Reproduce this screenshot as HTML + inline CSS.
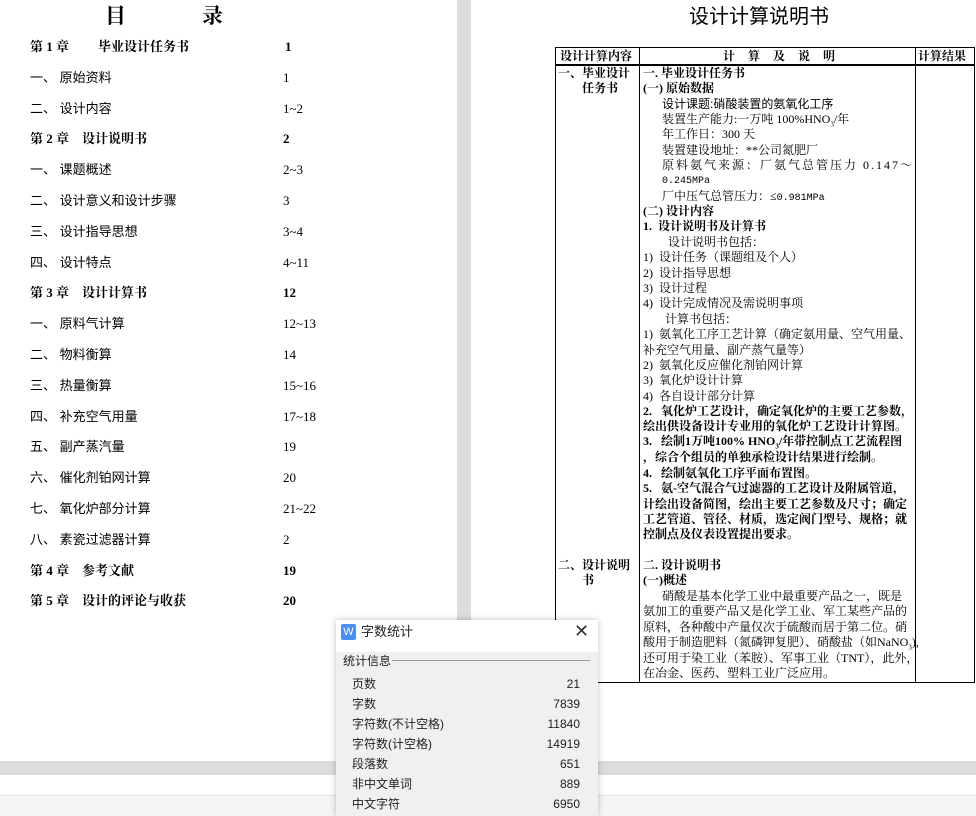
<!DOCTYPE html>
<html><head><meta charset="utf-8"><style>
*{margin:0;padding:0;box-sizing:border-box}
body{width:976px;height:816px;overflow:hidden;background:#fff;position:relative;font-family:"Liberation Serif","Noto Serif CJK SC",serif;color:#000}
.a{position:absolute;white-space:nowrap;line-height:16px}
.t{font-size:13px}
.b{font-weight:bold}
.s{font-family:"Liberation Sans","Noto Sans CJK SC",sans-serif}
.r{font-size:12px;line-height:15px}
.d{font-family:"Liberation Sans","Noto Sans CJK SC",sans-serif;font-size:12px;color:#222}
</style></head><body>
<div class="a" style="left:457px;top:0;width:14px;height:761px;background:#dcdddf"></div>
<div class="a" style="left:0;top:761px;width:976px;height:14px;background:#dbdcde"></div>
<div class="a" style="left:0;top:795px;width:976px;height:1px;background:#e2e3e5"></div>
<div class="a" style="left:0;top:796px;width:976px;height:20px;background:#f4f5f7"></div>

<div class="a b" style="left:105px;top:4px;font-size:21px;line-height:24px">目</div>
<div class="a b" style="left:202px;top:4px;font-size:21px;line-height:24px">录</div>

<div class="a t b" style="left:30px;top:39px">第 1 章</div><div class="a t b" style="left:98px;top:39px">毕业设计任务书</div><div class="a t b" style="left:285px;top:39px">1</div>
<div class="a t s" style="left:30px;top:70px">一、 原始资料</div><div class="a t" style="left:283px;top:70px">1</div>
<div class="a t s" style="left:30px;top:101px">二、 设计内容</div><div class="a t" style="left:283px;top:101px">1~2</div>
<div class="a t b" style="left:30px;top:131px">第 2 章</div><div class="a t b" style="left:82px;top:131px">设计说明书</div><div class="a t b" style="left:283px;top:131px">2</div>
<div class="a t s" style="left:30px;top:162px">一、 课题概述</div><div class="a t" style="left:283px;top:162px">2~3</div>
<div class="a t s" style="left:30px;top:193px">二、 设计意义和设计步骤</div><div class="a t" style="left:283px;top:193px">3</div>
<div class="a t s" style="left:30px;top:224px">三、 设计指导思想</div><div class="a t" style="left:283px;top:224px">3~4</div>
<div class="a t s" style="left:30px;top:255px">四、 设计特点</div><div class="a t" style="left:283px;top:255px">4~11</div>
<div class="a t b" style="left:30px;top:285px">第 3 章</div><div class="a t b" style="left:82px;top:285px">设计计算书</div><div class="a t b" style="left:283px;top:285px">12</div>
<div class="a t s" style="left:30px;top:316px">一、 原料气计算</div><div class="a t" style="left:283px;top:316px">12~13</div>
<div class="a t s" style="left:30px;top:347px">二、 物料衡算</div><div class="a t" style="left:283px;top:347px">14</div>
<div class="a t s" style="left:30px;top:378px">三、 热量衡算</div><div class="a t" style="left:283px;top:378px">15~16</div>
<div class="a t s" style="left:30px;top:409px">四、 补充空气用量</div><div class="a t" style="left:283px;top:409px">17~18</div>
<div class="a t s" style="left:30px;top:439px">五、 副产蒸汽量</div><div class="a t" style="left:283px;top:439px">19</div>
<div class="a t s" style="left:30px;top:470px">六、 催化剂铂网计算</div><div class="a t" style="left:283px;top:470px">20</div>
<div class="a t s" style="left:30px;top:501px">七、 氧化炉部分计算</div><div class="a t" style="left:283px;top:501px">21~22</div>
<div class="a t s" style="left:30px;top:532px">八、 素瓷过滤器计算</div><div class="a t" style="left:283px;top:532px">2</div>
<div class="a t b" style="left:30px;top:563px">第 4 章</div><div class="a t b" style="left:82px;top:563px">参考文献</div><div class="a t b" style="left:283px;top:563px">19</div>
<div class="a t b" style="left:30px;top:593px">第 5 章</div><div class="a t b" style="left:82px;top:593px">设计的评论与收获</div><div class="a t b" style="left:283px;top:593px">20</div>

<div class="a" style="left:689px;top:5px;font-size:20px;line-height:24px;font-family:'Liberation Sans','Noto Sans CJK SC',sans-serif">设计计算说明书</div>

<div class="a" style="left:555px;top:47px;width:420px;height:636px;border:1.5px solid #000"></div>
<div class="a" style="left:639px;top:47px;width:1px;height:636px;background:#000"></div>
<div class="a" style="left:915px;top:47px;width:1px;height:636px;background:#000"></div>
<div class="a" style="left:555px;top:64px;width:420px;height:1.5px;background:#000"></div>
<div class="a r b" style="left:560px;top:49px">设计计算内容</div>
<div class="a r b" style="left:723px;top:49px;letter-spacing:5px">计 算 及 说 明</div>
<div class="a r b" style="left:918px;top:49px">计算结果</div>
<div class="a r b" style="left:558px;top:66px">一、毕业设计</div>
<div class="a r b" style="left:582px;top:81px">任务书</div>
<div class="a r b" style="left:558px;top:558px">二、设计说明</div>
<div class="a r b" style="left:582px;top:573px">书</div>

<div class="a r b" style="left:643px;top:66px">一. 毕业设计任务书</div>
<div class="a r b" style="left:643px;top:81px">(一) 原始数据</div>
<div class="a r s" style="left:662px;top:97px">设计课题:硝酸装置的氨氧化工序</div>
<div class="a r" style="left:662px;top:112px">装置生产能力:一万吨 100%HNO<sub style="font-size:7px">3</sub>/年</div>
<div class="a r" style="left:662px;top:127px">年工作日：300 天</div>
<div class="a r" style="left:662px;top:143px">装置建设地址：**公司氮肥厂</div>
<div class="a r" style="left:662px;top:158px;letter-spacing:2px">原料氨气来源：厂氨气总管压力 0.147～</div>
<div class="a r" style="left:662px;top:174px;font-size:10px;font-family:'Liberation Mono',monospace">0.245MPa</div>
<div class="a r" style="left:662px;top:189px">厂中压气总管压力：≤<span style="font-family:'Liberation Mono',monospace;font-size:10px">0.981MPa</span></div>
<div class="a r b" style="left:643px;top:204px">(二) 设计内容</div>
<div class="a r b" style="left:643px;top:219px">1. &nbsp;设计说明书及计算书</div>
<div class="a r" style="left:668px;top:235px">设计说明书包括：</div>
<div class="a r" style="left:643px;top:250px">1) &nbsp;设计任务（课题组及个人）</div>
<div class="a r" style="left:643px;top:266px">2) &nbsp;设计指导思想</div>
<div class="a r" style="left:643px;top:281px">3) &nbsp;设计过程</div>
<div class="a r" style="left:643px;top:296px">4) &nbsp;设计完成情况及需说明事项</div>
<div class="a r" style="left:665px;top:312px">计算书包括：</div>
<div class="a r" style="left:643px;top:327px">1) &nbsp;氨氧化工序工艺计算（确定氨用量、空气用量、</div>
<div class="a r" style="left:643px;top:343px">补充空气用量、副产蒸气量等）</div>
<div class="a r" style="left:643px;top:358px">2) &nbsp;氨氧化反应催化剂铂网计算</div>
<div class="a r" style="left:643px;top:373px">3) &nbsp;氧化炉设计计算</div>
<div class="a r" style="left:643px;top:389px">4) &nbsp;各自设计部分计算</div>
<div class="a r b" style="left:643px;top:404px">2. &nbsp;&nbsp;氧化炉工艺设计，确定氧化炉的主要工艺参数，</div>
<div class="a r b" style="left:643px;top:419px">绘出供设备设计专业用的氧化炉工艺设计计算图。</div>
<div class="a r b" style="left:643px;top:434px">3. &nbsp;&nbsp;绘制1万吨100% HNO<sub style="font-size:7px">3</sub>/年带控制点工艺流程图</div>
<div class="a r b" style="left:643px;top:450px">，综合个组员的单独承检设计结果进行绘制。</div>
<div class="a r b" style="left:643px;top:466px">4. &nbsp;&nbsp;绘制氨氧化工序平面布置图。</div>
<div class="a r b" style="left:643px;top:481px">5. &nbsp;&nbsp;氨-空气混合气过滤器的工艺设计及附属管道，</div>
<div class="a r b" style="left:643px;top:497px">计绘出设备简图，绘出主要工艺参数及尺寸；确定</div>
<div class="a r b" style="left:643px;top:512px">工艺管道、管径、材质，选定阀门型号、规格；就</div>
<div class="a r b" style="left:643px;top:527px">控制点及仪表设置提出要求。</div>
<div class="a r b" style="left:643px;top:558px">二. 设计说明书</div>
<div class="a r b" style="left:643px;top:573px">(一)概述</div>
<div class="a r" style="left:662px;top:589px">硝酸是基本化学工业中最重要产品之一，既是</div>
<div class="a r" style="left:643px;top:604px">氨加工的重要产品又是化学工业、军工某些产品的</div>
<div class="a r" style="left:643px;top:620px">原料，各种酸中产量仅次于硫酸而居于第二位。硝</div>
<div class="a r" style="left:643px;top:635px">酸用于制造肥料（氮磷钾复肥）、硝酸盐（如NaNO<sub style="font-size:7px">3</sub>),</div>
<div class="a r" style="left:643px;top:651px">还可用于染工业（苯胺）、军事工业（TNT），此外，</div>
<div class="a r" style="left:643px;top:666px">在冶金、医药、塑料工业广泛应用。</div>

<div class="a" style="left:336px;top:620px;width:262px;height:196px;background:#f0f0f0;box-shadow:0 0 6px rgba(0,0,0,.25)"></div>
<div class="a" style="left:336px;top:620px;width:262px;height:32px;background:#fff"></div>
<div class="a" style="left:341px;top:624px;width:15px;height:16px;background:#4a8ef0;border-radius:2px;color:#fff;font-size:11px;line-height:16px;text-align:center;font-family:'Liberation Sans',sans-serif">W</div>
<div class="a d" style="left:361px;top:624px;font-size:13px">字数统计</div>
<div class="a" style="left:574px;top:622px;font-size:18px;line-height:20px;color:#333;font-family:'DejaVu Sans',sans-serif">✕</div>
<div class="a d" style="left:343px;top:653px">统计信息</div>
<div class="a" style="left:392px;top:660px;width:198px;height:1px;background:#999"></div>
<div class="a d" style="left:352px;top:676px">页数</div><div class="a d" style="left:540px;top:676px;width:40px;text-align:right">21</div>
<div class="a d" style="left:352px;top:696px">字数</div><div class="a d" style="left:540px;top:696px;width:40px;text-align:right">7839</div>
<div class="a d" style="left:352px;top:716px">字符数(不计空格)</div><div class="a d" style="left:530px;top:716px;width:50px;text-align:right">11840</div>
<div class="a d" style="left:352px;top:736px">字符数(计空格)</div><div class="a d" style="left:530px;top:736px;width:50px;text-align:right">14919</div>
<div class="a d" style="left:352px;top:756px">段落数</div><div class="a d" style="left:540px;top:756px;width:40px;text-align:right">651</div>
<div class="a d" style="left:352px;top:776px">非中文单词</div><div class="a d" style="left:540px;top:776px;width:40px;text-align:right">889</div>
<div class="a d" style="left:352px;top:796px">中文字符</div><div class="a d" style="left:540px;top:796px;width:40px;text-align:right">6950</div>
</body></html>
